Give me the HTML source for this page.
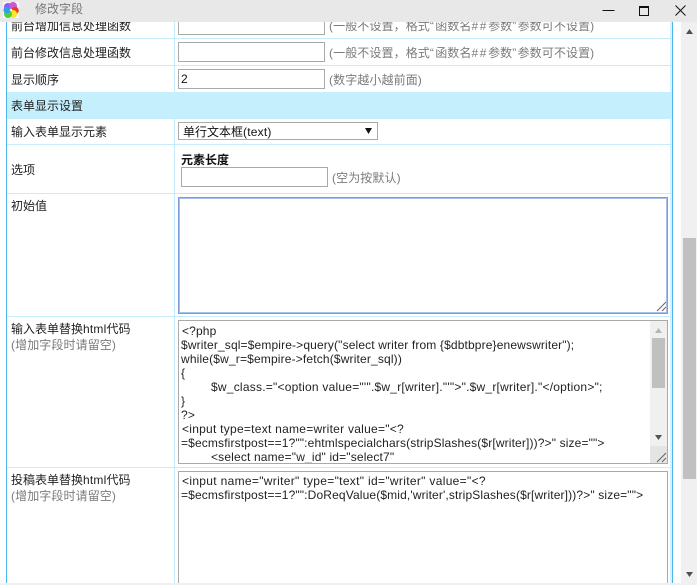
<!DOCTYPE html>
<html style="width:697px;height:585px;overflow:hidden"><head><meta charset="utf-8"><style>
html,body{margin:0;padding:0;background:#fff}
body{width:697px;height:585px;overflow:hidden;position:relative;font:12px/14px "Liberation Sans","WenQuanYi Zen Hei","Noto Sans CJK SC",sans-serif;color:#222}
div{position:absolute;box-sizing:border-box}
.t{white-space:pre}
.h{background:#c6ecfd;height:1px}
.g{color:#7b7b7b;letter-spacing:.1px}
.b{border:1px solid #a9a9a9;background:#fff}
.c{white-space:pre;color:#222;left:181px;letter-spacing:.14px}
.q{letter-spacing:1.300px}
.s{letter-spacing:1.600px}
</style></head><body>
<div style="left:6px;top:22px;width:1px;height:561px;background:#4ab5ea"></div>
<div style="left:672px;top:22px;width:1px;height:561px;background:#4ab5ea"></div>
<div style="left:174px;top:22px;width:1px;height:561px;background:#c6ecfd"></div>
<div style="left:670px;top:22px;width:2px;height:561px;background:#d6f2fe"></div>

<div class="h" style="left:7px;top:38px;width:665px"></div>
<div class="h" style="left:7px;top:65px;width:665px"></div>
<div style="left:7px;top:92px;width:665px;height:27px;background:#c6effe"></div>
<div class="h" style="left:7px;top:144px;width:665px"></div>
<div class="h" style="left:7px;top:193px;width:665px"></div>
<div class="h" style="left:7px;top:316px;width:665px"></div>
<div class="h" style="left:7px;top:467px;width:665px"></div>

<div class="t" style="left:11px;top:19px">前台增加信息处理函数</div>
<div class="t" style="left:11px;top:46px">前台修改信息处理函数</div>
<div class="t" style="left:11px;top:73px">显示顺序</div>
<div class="t" style="left:11px;top:99px">表单显示设置</div>
<div class="t" style="left:11px;top:125px">输入表单显示元素</div>
<div class="t" style="left:11px;top:163px">选项</div>
<div class="t" style="left:11px;top:199px">初始值</div>
<div class="t" style="left:11px;top:322px">输入表单替换<span style="letter-spacing:.2px">html</span>代码</div>
<div class="t g" style="left:11px;top:338px">(增加字段时请留空)</div>
<div class="t" style="left:11px;top:473px">投稿表单替换<span style="letter-spacing:.2px">html</span>代码</div>
<div class="t g" style="left:11px;top:489px">(增加字段时请留空)</div>

<div class="b" style="left:178px;top:15px;width:147px;height:20px"></div>
<div class="t g" style="left:329px;top:19px">(一般不设置，格式<span class="q">“</span>函数名<span class="s">##</span>参数<span class="q">”</span>参数可不设置)</div>
<div class="b" style="left:178px;top:42px;width:147px;height:20px"></div>
<div class="t g" style="left:329px;top:46px">(一般不设置，格式<span class="q">“</span>函数名<span class="s">##</span>参数<span class="q">”</span>参数可不设置)</div>
<div class="b t" style="left:178px;top:69px;width:147px;height:20px;padding:2px 2px;color:#111">2</div>
<div class="t g" style="left:329px;top:73px">(数字越小越前面)</div>

<div class="b t" style="left:178px;top:122px;width:200px;height:18px;padding:2px 4px;color:#111">单行文本框<span style="letter-spacing:.2px">(text)</span></div>
<svg style="position:absolute;left:365px;top:128px" width="7" height="6"><path d="M0 0H7L3.500 6Z" fill="#111"/></svg>

<div class="t" style="left:181px;top:153px;font-weight:bold;color:#111">元素长度</div>
<div class="b" style="left:181px;top:167px;width:147px;height:20px"></div>
<div class="t g" style="left:332px;top:171px">(空为按默认)</div>

<div style="left:178px;top:197px;width:490px;height:117px;border:1px solid #7a9bdc;box-shadow:inset 0 0 0 1px #aac0ec;background:#fff"></div>
<svg style="position:absolute;left:656px;top:301px" width="11" height="11"><path d="M1 10L10 1M6 10L10 6" stroke="#666" fill="none"/></svg>

<div class="b" style="left:178px;top:320px;width:490px;height:144px"></div>
<div style="left:650px;top:321px;width:17px;height:142px;background:#f0f0f0"></div>
<div style="left:652px;top:338px;width:13px;height:50px;background:#c0c0c0"></div>
<div style="left:650px;top:446px;width:17px;height:17px;background:#e4e4e4"></div>
<svg style="position:absolute;left:655px;top:328px" width="7" height="5"><path d="M0 5H7L3.500 0Z" fill="#b5b5b5"/></svg>
<svg style="position:absolute;left:655px;top:435px" width="7" height="5"><path d="M0 0H7L3.500 5Z" fill="#555"/></svg>
<svg style="position:absolute;left:656px;top:452px" width="11" height="11"><path d="M1 10L10 1M6 10L10 6" stroke="#666" fill="none"/></svg>

<div style="left:179px;top:321px;width:471px;height:142px;overflow:hidden">
<div class="c" style="left:3px;top:3px">&lt;?php</div>
<div class="c" style="left:2px;top:17px">$writer_sql=$empire-&gt;query("select writer from {$dbtbpre}enewswriter");</div>
<div class="c" style="left:2px;top:31px;letter-spacing:.16px">while($w_r=$empire-&gt;fetch($writer_sql))</div>
<div class="c" style="left:2px;top:45px">{</div>
<div class="c" style="left:32px;top:59px;letter-spacing:.23px">$w_class.="&lt;option value="'".$w_r[writer]."'"&gt;".$w_r[writer]."&lt;/option&gt;";</div>
<div class="c" style="left:2px;top:73px">}</div>
<div class="c" style="left:2px;top:87px">?&gt;</div>
<div class="c" style="left:3px;top:101px;letter-spacing:.26px">&lt;input type=text name=writer value="&lt;?</div>
<div class="c" style="left:2px;top:115px">=$ecmsfirstpost==1?"":ehtmlspecialchars(stripSlashes($r[writer]))?&gt;" size=""&gt;</div>
<div class="c" style="left:32px;top:129px;letter-spacing:.16px">&lt;select name="w_id" id="select7"</div>
</div>

<div style="left:178px;top:471px;width:490px;height:112px;border:1px solid #a9a9a9;border-bottom:0;background:#fff"></div>
<div class="c" style="left:182px;top:474px;letter-spacing:.32px">&lt;input name="writer" type="text" id="writer" value="&lt;?</div>
<div class="c" style="left:181px;top:488px">=$ecmsfirstpost==1?"":DoReqValue($mid,'writer',stripSlashes($r[writer]))?&gt;" size=""&gt;</div>

<div style="left:681px;top:22px;width:16px;height:563px;background:#f0f0f0"></div>
<div style="left:683px;top:238px;width:13px;height:241px;background:#c0c0c0"></div>
<svg style="position:absolute;left:686px;top:29px" width="7" height="5"><path d="M0 5H7L3.500 0Z" fill="#505050"/></svg>
<svg style="position:absolute;left:686px;top:572px" width="7" height="5"><path d="M0 0H7L3.500 5Z" fill="#505050"/></svg>
<div style="left:0;top:583px;width:697px;height:2px;background:#f0f0f0"></div>

<div style="left:0;top:0;width:697px;height:22px;background:#e8e8e8"></div>
<svg style="position:absolute;left:3px;top:2px" width="16" height="16" viewBox="0 0 16 16">
<rect width="16" height="16" fill="#f6f6f6"/>
<circle cx="5" cy="5" r="4" fill="#8a5cf0"/>
<circle cx="10" cy="4" r="4" fill="#c65ad8"/>
<circle cx="12" cy="8.500" r="3.800" fill="#f23c22"/>
<circle cx="10" cy="12" r="4" fill="#f7e82a"/>
<circle cx="5" cy="12" r="4" fill="#4fce3c"/>
<circle cx="3.800" cy="8" r="3.400" fill="#2f9df0"/>
<circle cx="8" cy="8" r="1.200" fill="#f2f2f2"/>
</svg>
<div class="t" style="left:35px;top:2px;color:#777">修改字段</div>
<svg style="position:absolute;left:597px;top:0" width="100" height="22"><path d="M5.500 10.500H17.500" stroke="#111"/><rect x="42.500" y="6.500" width="9" height="9" fill="none" stroke="#111"/><path d="M42 7H52" stroke="#111" stroke-width="2"/><path d="M78.500 5.500L88.500 15.500M88.500 5.500L78.500 15.500" stroke="#111" fill="none"/></svg>
</body></html>
